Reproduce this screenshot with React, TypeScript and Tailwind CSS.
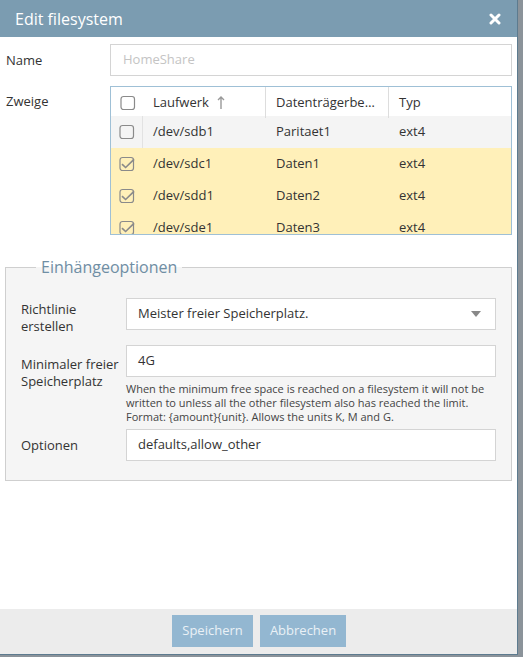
import React from 'react';

type Row = { dev: string; label: string; type: string; checked: boolean };

const rows: Row[] = [
  { dev: '/dev/sdb1', label: 'Paritaet1', type: 'ext4', checked: false },
  { dev: '/dev/sdc1', label: 'Daten1', type: 'ext4', checked: true },
  { dev: '/dev/sdd1', label: 'Daten2', type: 'ext4', checked: true },
  { dev: '/dev/sde1', label: 'Daten3', type: 'ext4', checked: true },
];

function Box({ checked }: { checked: boolean }) {
  return (
    <svg width="16" height="16" viewBox="0 0 16 16">
      <rect x="1" y="1.5" width="13.5" height="13" rx="2.5" fill="none" stroke="#8a8a8a" strokeWidth="1.2" />
      {checked && (
        <path d="M3.6 7.6 L6.6 10.4 L14.6 2.6 L15.6 4 L6.6 12.6 L2.4 8.8 Z" fill="#8a8a8a" />
      )}
    </svg>
  );
}

function Label({ children }: { children: React.ReactNode }) {
  return <div className="w-[105px] shrink-0 pt-[8px] text-[13px] leading-[17px] text-[#333]">{children}</div>;
}

export default function App() {
  return (
    <div className="w-[523px] h-[657px] bg-[#8b939a] overflow-hidden" style={{ fontFamily: '"Open Sans", sans-serif' }}>
      <div className="w-[518px] h-[655px] bg-white border-r border-b border-[#5d7b8f] flex flex-col">
        {/* header */}
        <div className="h-[37px] shrink-0 bg-[#7b9cb1] flex items-center justify-between pl-[15px] pr-[16px]">
          <span className="text-white text-[16px]">Edit filesystem</span>
          <svg width="12" height="12" viewBox="0 0 12 12">
            <path d="M2 2 L10 10 M10 2 L2 10" stroke="#fff" strokeWidth="3" strokeLinecap="round" />
          </svg>
        </div>

        <div className="flex-1 px-[5px] pt-[7px]">
          {/* name */}
          <div className="flex">
            <div className="w-[105px] shrink-0 pl-[1px] pt-[7px] text-[13px] text-[#333]">Name</div>
            <div className="flex-1 h-[32px] border border-[#d4d4d4] flex items-center px-[12px] text-[13px] text-[#c4c4c4]">
              HomeShare
            </div>
          </div>

          {/* grid */}
          <div className="flex mt-[10px]">
            <div className="w-[105px] shrink-0 pl-[1px] pt-[6px] text-[13px] text-[#333]">Zweige</div>
            <div className="flex-1 h-[149px] border border-[#9fc0d6] overflow-hidden text-[13px] text-[#333]">
              <div className="h-[33px] flex items-center bg-white border-b-2 border-[#d0d0d0]">
                <div className="w-[32px] flex justify-center pl-[1px]"><Box checked={false} /></div>
                <div className="w-[122px] h-full flex items-center pl-[10px] gap-[8px]">
                  Laufwerk
                  <svg width="8" height="14" viewBox="0 0 8 14">
                    <path d="M4 1 L4 13 M1 4 L4 1 L7 4" stroke="#999" strokeWidth="1.4" fill="none" />
                  </svg>
                </div>
                <div className="w-[123px] h-full flex items-center pl-[10px] border-l border-[#ddd]">Datenträgerbe…</div>
                <div className="flex-1 h-full flex items-center pl-[10px] border-l border-[#ddd]">Typ</div>
              </div>
              <div className="-mt-[4px]">
                {rows.map((r) => (
                  <div key={r.dev} className={`h-[32px] flex items-center ${r.checked ? 'bg-[#fff0b9]' : 'bg-[#f4f4f4]'}`}>
                    <div className={`w-[32px] h-full flex items-center justify-center pl-[1px] border-r ${r.checked ? 'border-[#fff0b9]' : 'border-[#e2e2e2]'}`}>
                      <Box checked={r.checked} />
                    </div>
                    <div className="w-[122px] pl-[10px]">{r.dev}</div>
                    <div className="w-[123px] pl-[11px]">{r.label}</div>
                    <div className="flex-1 pl-[11px]">{r.type}</div>
                  </div>
                ))}
              </div>
            </div>
          </div>

          {/* fieldset */}
          <fieldset className="mt-[21px] border border-[#cfcfcf] bg-[#f5f5f5] pl-[15px] pr-[15px] pb-[19px]">
            <legend className="ml-[15px] px-[5px] text-[16px] leading-[22px] text-[#6f8ea4]">Einhängeoptionen</legend>
            <div className="flex mt-[20px]">
              <Label>
                <div className="-mt-[5px]">Richtlinie<br />erstellen</div>
              </Label>
              <div className="flex-1 h-[32px] bg-white border border-[#d4d4d4] flex items-center justify-between pl-[11px] pr-[14px] text-[13px] text-[#333]">
                Meister freier Speicherplatz.
                <svg width="10" height="6" viewBox="0 0 10 6">
                  <path d="M0 0 L10 0 L5 6 Z" fill="#888" />
                </svg>
              </div>
            </div>
            <div className="flex mt-[10px]">
              <Label>
                <div className="mt-[3px]">Minimaler freier<br />Speicherplatz</div>
              </Label>
              <div className="flex-1">
                <div className="h-[32px] bg-white border border-[#d4d4d4] flex items-center px-[11px] text-[13px] text-[#333]">4G</div>
                <div className="mt-[5px] text-[11px] leading-[14px] text-[#444]">
                  When the minimum free space is reached on a filesystem it will not be written to unless all the other filesystem also has reached the limit. Format: {'{amount}{unit}'}. Allows the units K, M and G.
                </div>
              </div>
            </div>
            <div className="flex mt-[5px]">
              <Label>Optionen</Label>
              <div className="flex-1 h-[32px] bg-white border border-[#d4d4d4] flex items-center px-[11px] text-[13px] text-[#333]">
                defaults,allow_other
              </div>
            </div>
          </fieldset>
        </div>

        {/* footer */}
        <div className="h-[45px] shrink-0 bg-[#ececec] flex items-start justify-center gap-[7px] pt-[6px] pl-[1px]">
          <button className="w-[81px] h-[32px] bg-[#93b7d1] text-[13px] text-[#eaf1f6]">Speichern</button>
          <button className="w-[86px] h-[32px] bg-[#93b7d1] text-[13px] text-[#eaf1f6]">Abbrechen</button>
        </div>
      </div>
    </div>
  );
}
